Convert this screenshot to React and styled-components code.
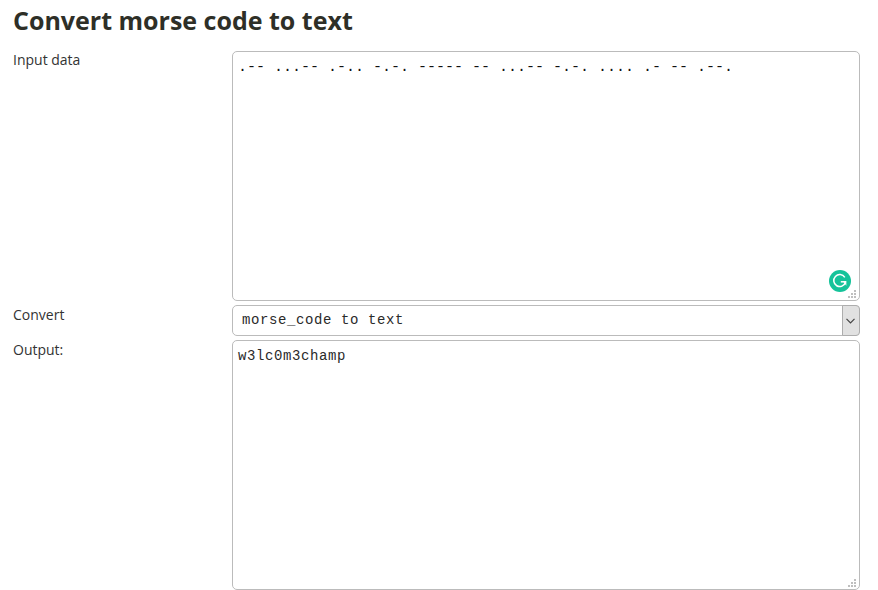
import React from "react";
import styled, { createGlobalStyle } from "styled-components";

const GlobalStyle = createGlobalStyle`
  * { box-sizing: border-box; }
  body { margin: 0; background: #fff; overflow: hidden; }
`;

const Page = styled.main`
  width: 878px;
  height: 590px;
  padding: 0 18px 0 13px;
  overflow: hidden;
  color: #333;
  font-family: "Open Sans", sans-serif;
`;

const Title = styled.h1`
  margin: 0;
  height: 51px;
  padding-top: 4px;
  font-size: 25px;
  line-height: 33px;
  font-weight: 700;
  color: #2e2f27;
  white-space: nowrap;
`;

const Form = styled.div`
  display: grid;
  grid-template-columns: 219px 628px;
  grid-template-rows: 250px 31px 250px;
  row-gap: 4px;
`;

const Label = styled.div`
  font-size: 14px;
  line-height: ${(p) => (p.$tight ? "17px" : "19px")};
`;

const Field = styled.div`
  position: relative;
  border: 1px solid #bbb;
  border-radius: 5px;
  padding: 6px 5px;
  font-family: "Liberation Mono", "Courier New", monospace;
  font-size: 14px;
  letter-spacing: 0.6px;
  line-height: 18px;
  color: #2a2a2a;
  white-space: pre;
`;

const MorseField = styled(Field)`
  padding: 7px 5px;
  font-size: 15px;
  letter-spacing: 0;
  color: #111;
`;

const SelectField = styled(Field)`
  display: flex;
  justify-content: space-between;
  padding: 0 0 0 9px;
  line-height: 29px;
`;

const Arrow = styled.span`
  display: flex;
  align-items: center;
  justify-content: center;
  width: 18px;
  height: 31px;
  margin: -1px -1px 0 0;
  padding-right: 1px;
  border: 1px solid #adadad;
  border-radius: 0 4px 4px 0;
  background: #e1e1e1;
`;

const Grip = styled.svg`
  position: absolute;
  right: 3px;
  bottom: 2px;
`;

const Badge = styled.svg`
  position: absolute;
  right: 7px;
  bottom: 7px;
`;

const dots = [[6, 0], [3, 3], [6, 3], [0, 6], [3, 6], [6, 6]];

function ResizeGrip() {
  return (
    <Grip width="8" height="8" shapeRendering="crispEdges">
      {dots.map(([x, y]) => (
        <rect key={`${x}-${y}`} x={x} y={y} width="2" height="2" fill="#bfbfbf" />
      ))}
    </Grip>
  );
}

export default function App() {
  return (
    <Page>
      <GlobalStyle />
      <Title>Convert morse code to text</Title>
      <Form>
        <Label $tight>Input data</Label>
        <MorseField>
          {".-- ...-- .-.. -.-. ----- -- ...-- -.-. .... .- -- .--."}
          <Badge width="23" height="23" viewBox="0 0 23 23" fill="none">
            <circle cx="11" cy="11" r="11" fill="#15c39a" />
            <path d="M15.8 7.3A6 6 0 1 0 16.5 12.3" stroke="#fff" strokeWidth="1.5" />
            <path d="M11.8 11.8H17.1" stroke="#fff" strokeWidth="1.5" />
            <path d="M13.8 11.1H17.3V15.8Z" fill="#fff" />
          </Badge>
          <ResizeGrip />
        </MorseField>
        <Label>Convert</Label>
        <SelectField>
          morse_code to text
          <Arrow>
            <svg width="9" height="6" viewBox="0 0 9 6" fill="none">
              <path d="M0.5 0.8 4.5 4.8 8.5 0.8" stroke="#444" strokeWidth="1.2" />
            </svg>
          </Arrow>
        </SelectField>
        <Label>Output:</Label>
        <Field>
          w3lc0m3champ
          <ResizeGrip />
        </Field>
      </Form>
    </Page>
  );
}
